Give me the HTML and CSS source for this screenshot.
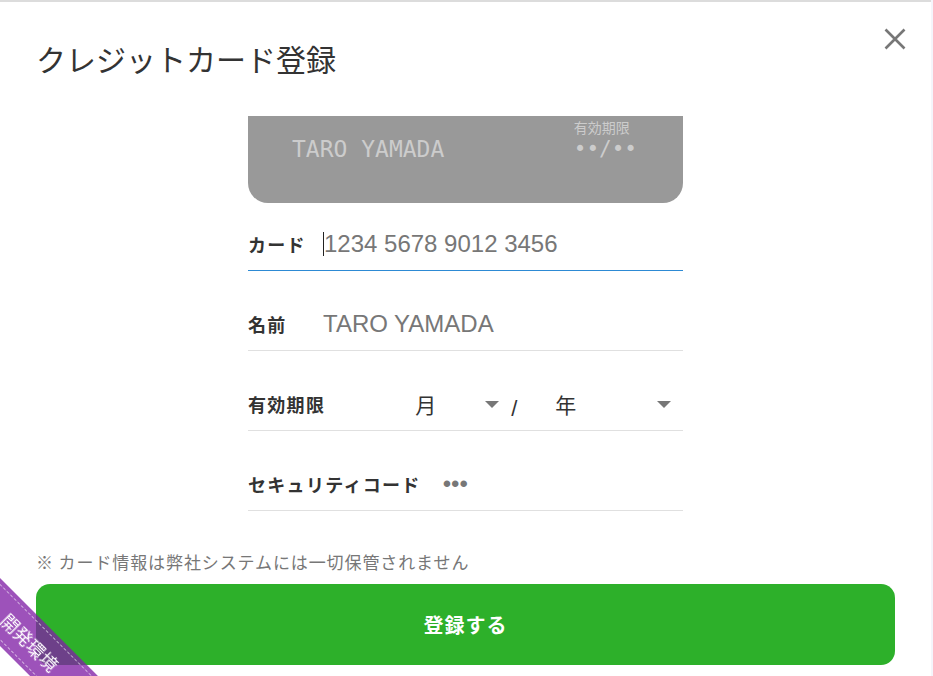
FILE: index.html
```html
<!DOCTYPE html>
<html lang="ja">
<head>
<meta charset="UTF-8">
<title>クレジットカード登録</title>
<meta name="viewport" content="width=device-width, initial-scale=1.0">
<link rel="stylesheet" href="styles.css">
</head>
<body>
<div class="modal">
<div class="modal-header">
<h1 class="title">クレジットカード登録</h1>
<button class="close" type="button" aria-label="閉じる">
<svg width="22" height="22" viewBox="0 0 22 22"><path d="M1.5 1.5 L20.5 20.5 M20.5 1.5 L1.5 20.5" stroke="#777" stroke-width="2.6" fill="none"/></svg>
</button>
</div>

<div class="modal-body">
<div class="form">
<div class="card-preview">
<div class="card-name">TARO YAMADA</div>
<div class="card-exp">
<div class="card-exp-label">有効期限</div>
<div class="card-exp-value">••/••</div>
</div>
</div>

<div class="row row-first focused">
<label class="row-label" for="number">カード</label>
<span class="caret"></span>
<input class="field" id="number" type="text" placeholder="1234 5678 9012 3456">
</div>

<div class="row">
<label class="row-label" for="name">名前</label>
<input class="field" id="name" type="text" value="TARO YAMADA">
</div>

<div class="row">
<label class="row-label">有効期限</label>
<div class="select select-month"><span>月</span><i class="arrow"></i></div>
<span class="slash">/</span>
<div class="select select-year"><span>年</span><i class="arrow"></i></div>
</div>

<div class="row">
<label class="row-label" for="cvc">セキュリティコード</label>
<span class="dots">•••</span>
</div>
</div>
</div>

<p class="note">※ カード情報は弊社システムには一切保管されません</p>
<button class="submit" type="button">登録する</button>
</div>

<div class="ribbon"><div class="ribbon-inner"><span>開発環境</span></div></div>
</body>
</html>
```

FILE: styles.css
```css
html, body {
height: 100%;
}

body {
margin: 0;
background: #f5f5fb;
overflow: hidden;
font-family: "Liberation Sans", "Noto Sans CJK JP", sans-serif;
color: #333;
}

.modal {
width: 931px;
height: 100%;
box-sizing: border-box;
background: #fff;
border-top: 2px solid #dcdcdc;
}

.modal-header {
display: flex;
justify-content: space-between;
align-items: flex-start;
padding: 26px 25px 0 36px;
}

.title {
margin: 10px 0 0;
font-family: "Noto Sans CJK JP", sans-serif;
font-size: 30px;
font-weight: 400;
line-height: 40px;
color: #333;
}

.close {
width: 22px;
height: 22px;
padding: 0;
border: none;
background: none;
}

.close svg {
display: block;
}

/* カード表示部分はスクロール領域 */
.modal-body {
height: 400px;
margin-top: 38px;
overflow: hidden;
}

.form {
width: 435px;
margin: 0 auto;
}

.card-preview {
height: 200px;
margin-top: -113px;
box-sizing: border-box;
background: #999;
border-radius: 20px;
display: flex;
justify-content: space-between;
align-items: flex-end;
padding: 0 46px 40px 44px;
color: #ccc;
}

.card-name {
font-family: "DejaVu Sans Mono", monospace;
font-size: 23px;
line-height: 28px;
}

.card-exp-label {
font-family: "Noto Sans CJK JP", sans-serif;
font-size: 14px;
line-height: 14px;
margin-bottom: 1px;
}

.card-exp-value {
font-family: "DejaVu Sans Mono", monospace;
font-size: 21px;
line-height: 28px;
}

.row {
display: flex;
align-items: center;
height: 28px;
padding: 39px 0 12px;
border-bottom: 1px solid #e0e0e0;
}

.row-first {
padding-top: 27px;
}

.row.focused {
border-bottom-color: #2d8ad4;
}

.row-label {
flex: none;
min-width: 75px;
padding-right: 17px;
box-sizing: border-box;
font-family: "Noto Sans CJK JP", sans-serif;
font-size: 18px;
font-weight: 700;
letter-spacing: 1.3px;
color: #333;
}

.field {
flex: 1;
min-width: 0;
padding: 0;
border: none;
outline: none;
background: none;
font-family: "Liberation Sans", sans-serif;
font-size: 24px;
color: #777;
}

.field::placeholder {
color: #777;
}

.caret {
width: 1px;
height: 24px;
background: #222;
}

.select {
display: flex;
align-items: center;
justify-content: space-between;
box-sizing: border-box;
font-family: "Noto Sans CJK JP", sans-serif;
font-size: 21px;
color: #333;
}

.select-month {
width: 163px;
padding: 0 6px 0 73px;
}

.select-year {
flex: 1;
padding: 0 12px 0 38px;
}

.arrow {
width: 0;
height: 0;
border-left: 7px solid transparent;
border-right: 7px solid transparent;
border-top: 7px solid #777;
}

.slash {
margin: 10px 0 0 6px;
font-size: 22px;
color: #333;
}

.dots {
margin-left: 5px;
font-size: 24px;
color: #777;
}

.note {
margin: 34px 0 0 36px;
font-family: "Noto Sans CJK JP", sans-serif;
font-size: 17px;
line-height: 24px;
letter-spacing: 0.9px;
color: #777;
}

.submit {
display: block;
width: 859px;
height: 81px;
margin: 10px 0 0 36px;
border: none;
border-radius: 14px;
background: #2db02a;
color: #fff;
font-family: "Noto Sans CJK JP", sans-serif;
font-size: 20px;
font-weight: 700;
letter-spacing: 1px;
}

/* 開発環境リボン */
.ribbon {
position: fixed;
left: -97px;
top: 616px;
width: 250px;
height: 48px;
box-sizing: border-box;
padding: 4px 0;
background: rgba(128, 30, 165, 0.77);
transform: rotate(45deg);
}

.ribbon-inner {
height: 38px;
padding-left: 6px;
border-top: 1px dashed rgba(255, 255, 255, 0.6);
border-bottom: 1px dashed rgba(255, 255, 255, 0.6);
text-align: center;
line-height: 38px;
font-family: "Noto Sans CJK JP", sans-serif;
font-size: 18px;
color: #fff;
}
```
